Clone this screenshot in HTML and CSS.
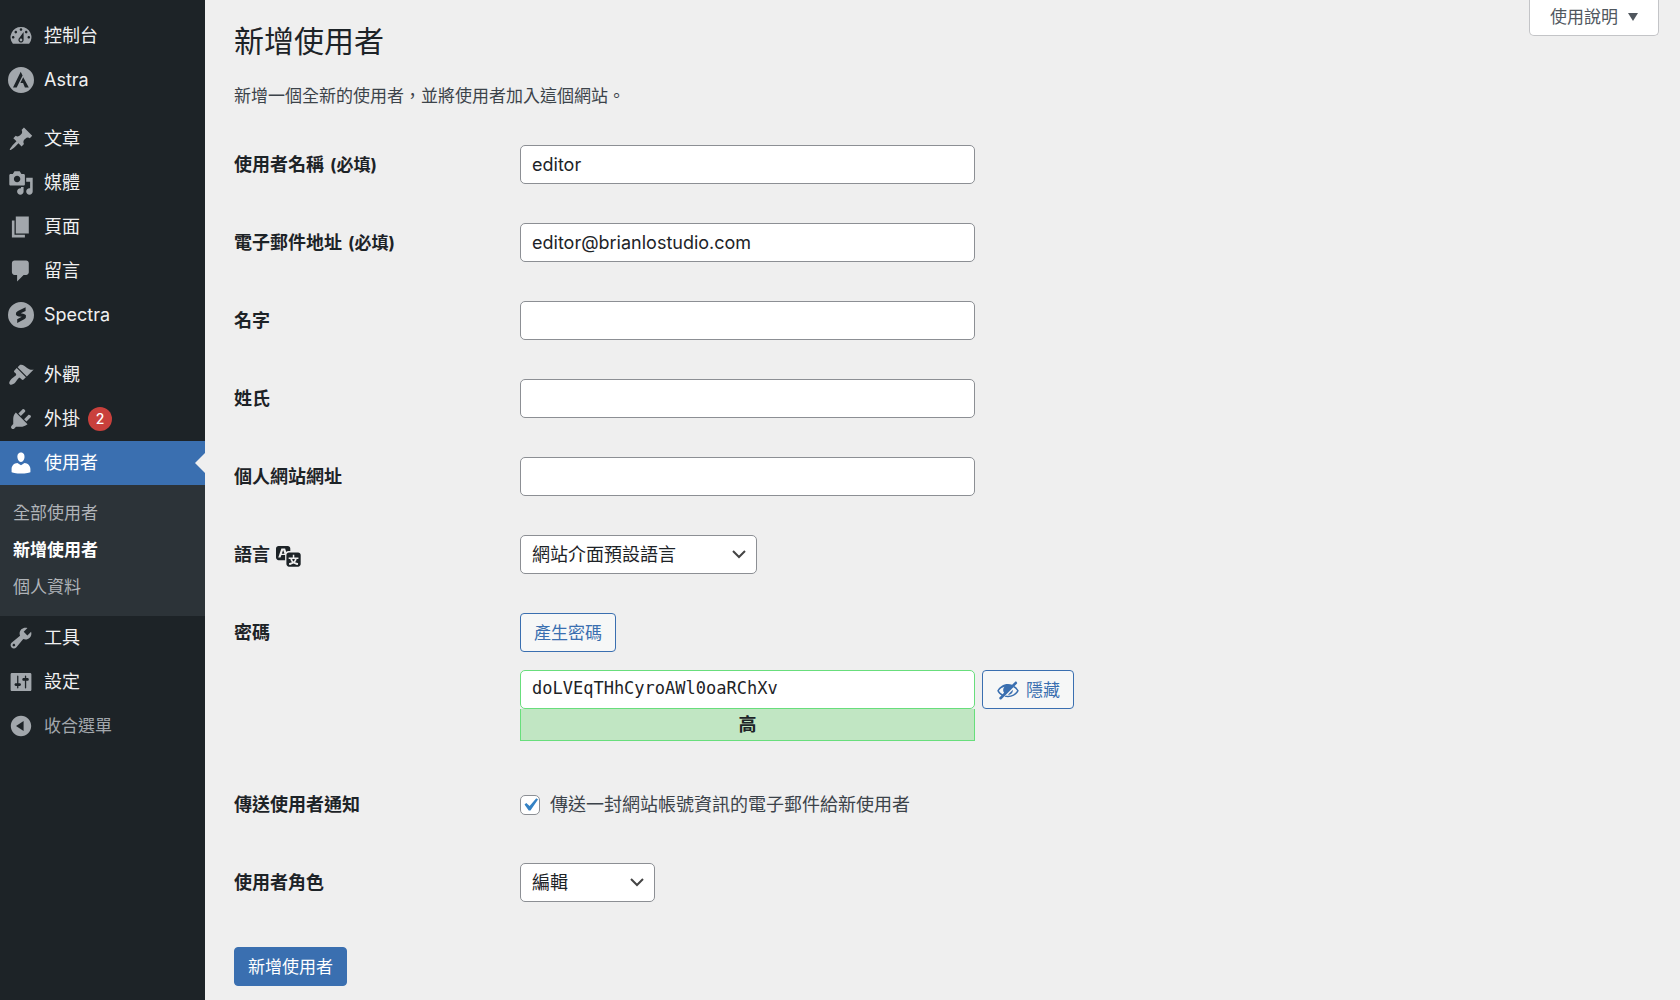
FILE: index.html
```html
<!DOCTYPE html>
<html lang="zh-Hant-TW">
<head>
<meta charset="utf-8">
<meta name="viewport" content="width=device-width, initial-scale=1">
<title>新增使用者</title>
<link rel="stylesheet" href="styles.css">
</head>
<body>
<div class="admin">
  <nav class="menu" aria-label="主選單">
    <ul class="menu-list">
      <li><a class="menu-item" href="#"><svg class="icon" viewBox="0 0 20 20"><path fill-rule="evenodd" d="M3.76 16h12.48A7.998 7.998 0 0 0 10 3a7.998 7.998 0 0 0-6.24 13zM10 4c.55 0 1 .45 1 1s-.45 1-1 1-1-.45-1-1 .45-1 1-1zM6 6c.55 0 1 .45 1 1s-.45 1-1 1-1-.45-1-1 .45-1 1-1zm8 0c.55 0 1 .45 1 1s-.45 1-1 1-1-.45-1-1 .45-1 1-1zm-5.37 5.55L12 7v6c0 1.1-.9 2-2 2s-2-.9-2-2c0-.57.24-1.08.63-1.45zM4 10c.55 0 1 .45 1 1s-.45 1-1 1-1-.45-1-1 .45-1 1-1zm12 0c.55 0 1 .45 1 1s-.45 1-1 1-1-.45-1-1 .45-1 1-1zm-5 3c0-.55-.45-1-1-1s-1 .45-1 1 .45 1 1 1 1-.45 1-1z"/></svg>控制台</a></li>
      <li><a class="menu-item" href="#"><svg class="icon" viewBox="0 0 26 26"><path fill-rule="evenodd" d="M13 0a13 13 0 1 1 0 26a13 13 0 0 1 0-26zM12.700 4.700L5 20.500h3.700l5.900-12zM15.200 10.300l-2.800 5.700h2.700l1.800 4.500h3.900z"/></svg>Astra</a></li>
      <li class="menu-group"><a class="menu-item" href="#"><svg class="icon" viewBox="0 0 20 20"><path d="M10.440 3.020l1.820-1.820 6.360 6.350-1.830 1.820c-1.050-.68-2.480-.57-3.410.36l-.75.75c-.92.93-1.040 2.350-.35 3.410l-1.830 1.820-2.410-2.410-2.800 2.790c-.42.42-3.380 2.710-3.800 2.290s1.860-3.390 2.280-3.810l2.790-2.790L4.100 9.360l1.830-1.820c1.050.69 2.480.57 3.400-.36l.75-.75c.93-.92 1.050-2.350.36-3.410z"/></svg>文章</a></li>
      <li><a class="menu-item" href="#"><svg class="icon" viewBox="0 0 20 20"><path fill-rule="evenodd" d="M13 11V4c0-.55-.45-1-1-1h-1.670L9 1H5L3.670 3H2c-.55 0-1 .45-1 1v7c0 .55.45 1 1 1h10c.55 0 1-.45 1-1zM7 4.500c1.380 0 2.500 1.120 2.500 2.500S8.380 9.500 7 9.500 4.500 8.380 4.500 7 5.620 4.500 7 4.500zM14 6h5v10.500c0 1.380-1.120 2.500-2.500 2.500S14 17.880 14 16.500s1.120-2.500 2.500-2.500c.17 0 .34.02.5.05V9h-3V6zm-4 8.050V13h2v3.500c0 1.380-1.120 2.500-2.500 2.500S7 17.880 7 16.500 8.120 14 9.500 14c.17 0 .34.02.5.05z"/></svg>媒體</a></li>
      <li><a class="menu-item" href="#"><svg class="icon" viewBox="0 0 20 20"><path d="M6 15V2h10v13H6zm-1 1h8v2H3V5h2v11z"/></svg>頁面</a></li>
      <li><a class="menu-item" href="#"><svg class="icon" viewBox="0 0 20 20"><path d="M5 2h9c1.100 0 2 .9 2 2v7c0 1.100-.9 2-2 2h-2l-5 5v-5H5c-1.100 0-2-.9-2-2V4c0-1.100.9-2 2-2z"/></svg>留言</a></li>
      <li><a class="menu-item" href="#"><svg class="icon" viewBox="0 0 26 26"><path fill-rule="evenodd" d="M13 0a13 13 0 1 1 0 26a13 13 0 0 1 0-26zM17.600 5.300L9.900 8.900Q7.400 10.200 7.900 12.600Q8.400 14.200 10.700 14.400L13.800 14.800L9.200 17.200V20.900L16.200 17.200Q18.500 15.800 18 13.600Q17.500 12 15.200 11.700L12.700 11.300L17.600 9z"/></svg>Spectra</a></li>
      <li class="menu-group"><a class="menu-item" href="#"><svg class="icon" viewBox="0 0 20 20"><path d="M14.480 11.060L7.410 3.990l1.500-1.500c.5-.56 2.300-.47 3.510.32 1.210.8 1.430 1.280 2.910 2.100 1.180.64 2.450 1.260 4.450.85zm-.71.71L6.700 4.700 4.930 6.470c-.39.39-.39 1.020 0 1.410l1.060 1.060c.39.39.39 1.030 0 1.420-.6.6-1.430 1.110-2.210 1.690-.35.26-.7.53-1.010.84C1.430 14.230.4 16.080 1.400 17.070c.99 1 2.840-.03 4.180-1.360.31-.31.58-.66.85-1.020.57-.78 1.080-1.610 1.690-2.210.39-.39 1.020-.39 1.410 0l1.060 1.060c.39.39 1.020.39 1.410 0z"/></svg>外觀</a></li>
      <li><a class="menu-item" href="#"><svg class="icon" viewBox="0 0 20 20"><path d="M13.110 4.360L9.870 7.600 8 5.730l3.240-3.240c.35-.34 1.050-.2 1.560.32.52.51.66 1.210.31 1.550zm-8 1.770l.91-1.120 9.010 9.010-1.190.84c-.71.71-2.630 1.160-3.820 1.160H6.140L4.900 17.260c-.59.59-1.540.59-2.120 0-.59-.58-.59-1.530 0-2.120l1.240-1.240v-3.880c0-1.130.4-3.190 1.090-3.890zm7.260 3.970l3.240-3.240c.34-.35 1.040-.21 1.550.31.52.51.66 1.210.31 1.550l-3.240 3.250z"/></svg>外掛<span class="badge">2</span></a></li>
      <li>
        <a class="menu-item menu-item-current" href="#"><svg class="icon" viewBox="0 0 20 20"><path d="M10 9.250c-2.270 0-2.730-3.440-2.730-3.440C7 4.020 7.820 2 9.970 2c2.160 0 2.980 2.020 2.710 3.810 0 0-.41 3.440-2.680 3.440zm0 2.570L12.720 10c2.390 0 4.520 2.330 4.520 4.530v2.490s-3.650 1.130-7.240 1.130c-3.650 0-7.240-1.130-7.240-1.130v-2.490c0-2.250 1.940-4.480 4.470-4.480z"/></svg>使用者</a>
        <ul class="submenu">
          <li><a class="submenu-item" href="#">全部使用者</a></li>
          <li><a class="submenu-item submenu-item-current" href="#" aria-current="page">新增使用者</a></li>
          <li><a class="submenu-item" href="#">個人資料</a></li>
        </ul>
      </li>
      <li><a class="menu-item" href="#"><svg class="icon" viewBox="0 0 20 20"><path fill-rule="evenodd" d="M16.680 9.770c-1.340 1.340-3.300 1.670-4.950.99l-5.410 6.520c-.99.99-2.590.99-3.580 0s-.99-2.590 0-3.570l6.520-5.420c-.68-1.650-.35-3.610.99-4.950 1.280-1.280 3.120-1.620 4.720-1.060l-2.890 2.890 2.820 2.820 2.860-2.870c.53 1.580.18 3.390-1.080 4.650zM3.810 16.210c.4.39 1.040.39 1.430 0 .4-.4.4-1.040 0-1.430-.39-.4-1.030-.4-1.430 0-.39.39-.39 1.030 0 1.430z"/></svg>工具</a></li>
      <li><a class="menu-item" href="#"><svg class="icon" viewBox="0 0 20 20"><path fill-rule="evenodd" d="M18 16V4c0-.55-.45-1-1-1H3c-.55 0-1 .45-1 1v12c0 .55.45 1 1 1h14c.55 0 1-.45 1-1zM8 11h1c.55 0 1 .45 1 1s-.45 1-1 1H8v1.500c0 .28-.22.5-.5.5s-.5-.22-.5-.5V13H6c-.55 0-1-.45-1-1s.45-1 1-1h1V5.500c0-.28.22-.5.5-.5s.5.22.5.5V11zm5-2h-1c-.55 0-1-.45-1-1s.45-1 1-1h1V5.500c0-.28.22-.5.5-.5s.5.22.5.5V7h1c.55 0 1 .45 1 1s-.45 1-1 1h-1v5.500c0 .28-.22.5-.5.5s-.5-.22-.5-.5V9z"/></svg>設定</a></li>
      <li><button class="menu-item menu-collapse" type="button"><svg class="icon" viewBox="0 0 20 20"><path fill-rule="evenodd" d="M10 2.160c4.330 0 7.840 3.510 7.840 7.840s-3.510 7.840-7.840 7.840S2.160 14.330 2.160 10 5.710 2.160 10 2.160zm2 11.720V6.120L6.180 9.970z"/></svg>收合選單</button></li>
    </ul>
  </nav>

  <main class="content">
    <header class="page-head">
      <h1>新增使用者</h1>
      <button class="help" type="button">使用說明<svg class="help-arrow" viewBox="0 0 10 8"><path d="M0 0h10L5 8z"/></svg></button>
    </header>
    <p class="intro">新增一個全新的使用者，並將使用者加入這個網站。</p>

    <form class="form">
      <div class="row"><label class="row-label" for="login">使用者名稱 <span class="required">(必填)</span></label><input class="field" id="login" type="text" value="editor"></div>
      <div class="row"><label class="row-label" for="email">電子郵件地址 <span class="required">(必填)</span></label><input class="field" id="email" type="email" value="editor@brianlostudio.com"></div>
      <div class="row"><label class="row-label" for="first">名字</label><input class="field" id="first" type="text"></div>
      <div class="row"><label class="row-label" for="last">姓氏</label><input class="field" id="last" type="text"></div>
      <div class="row"><label class="row-label" for="url">個人網站網址</label><input class="field" id="url" type="url"></div>
      <div class="row">
        <label class="row-label" for="locale">語言<svg class="translate" viewBox="0 0 20 20"><path fill-rule="evenodd" d="M11 7H9.490c-.63 0-1.250.3-1.590.7L7 5H4.130l-2.390 7h1.690l.74-2H7v4H2c-1.100 0-2-.9-2-2V5c0-1.100.9-2 2-2h7c1.100 0 2 .9 2 2v2zM6.510 9H4.490l1-2.930zM10 8h7c1.100 0 2 .9 2 2v7c0 1.100-.9 2-2 2h-7c-1.100 0-2-.9-2-2v-7c0-1.100.9-2 2-2zm7.250 5v-1.080h-3.170V9.750h-1.160v2.170H9.750V13h1.280c.11.85.56 1.850 1.280 2.620-.87.36-1.890.62-2.310.62-.01.02.22.97.2 1.460.84 0 2.210-.5 3.280-1.150 1.090.65 2.480 1.150 3.340 1.150-.02-.49.2-1.440.2-1.460-.43 0-1.490-.27-2.380-.63.7-.77 1.140-1.770 1.250-2.610h1.360zm-3.810 1.930c-.5-.46-.85-1.130-1.010-1.930h2.090c-.17.8-.51 1.470-1 1.930l-.04.03s-.03-.02-.04-.03z"/></svg></label>
        <select class="field select select-wide" id="locale"><option>網站介面預設語言</option></select>
      </div>
      <div class="row row-password">
        <label class="row-label" for="password">密碼</label>
        <div class="password">
          <button class="button" type="button">產生密碼</button>
          <div class="password-line">
            <div class="password-box">
              <input class="field field-password" id="password" type="text" value="doLVEqTHhCyroAWl0oaRChXv" spellcheck="false">
              <div class="strength">高</div>
            </div>
            <button class="button" type="button"><svg class="eye" viewBox="0 0 20 20"><path fill-rule="evenodd" d="M17.200 3.300l.16.170c.39.390.39 1.020 0 1.410L4.550 17.700c-.39.390-1.030.390-1.410 0l-.17-.17c-.39-.39-.39-1.020 0-1.410l1.590-1.600c-1.570-1-2.760-2.300-3.560-3.930.81-1.650 2.030-2.980 3.640-3.990S8.040 5.090 10 5.090c1.200 0 2.330.21 3.400.6l2.380-2.390c.39-.39 1.030-.39 1.420 0zM2.400 10.590c.69 1.230 1.710 2.250 3.050 3.050l1.280-1.280c-.51-.69-.77-1.470-.77-2.360 0-1.060.36-1.980 1.090-2.760-1.040.27-1.960.7-2.760 1.260-.8.58-1.430 1.270-1.890 2.090z"/><path d="M15.400 6.700C17 7.700 18.200 9 19 10.590c-1.700 3.400-5 5.500-9 5.500-1 0-2-.15-2.900-.4l1.100-1.100c3.900.7 7.500-.9 9.400-4-.75-1.250-1.800-2.200-3.200-2.900z"/><path d="M14.100 9.700c.1 2.400-1.700 4.300-4.200 4.300z"/></svg>隱藏</button>
          </div>
        </div>
      </div>
      <div class="row">
        <span class="row-label">傳送使用者通知</span>
        <label class="check"><input class="checkbox" type="checkbox" checked>傳送一封網站帳號資訊的電子郵件給新使用者</label>
      </div>
      <div class="row">
        <label class="row-label" for="role">使用者角色</label>
        <select class="field select select-narrow" id="role"><option>編輯</option></select>
      </div>
      <button class="button button-primary" type="submit">新增使用者</button>
    </form>
  </main>
</div>
</body>
</html>
```
FILE: styles.css
```css
* {
  box-sizing: border-box;
}

body {
  margin: 0;
  background: #efefef;
  color: #3c434a;
  font-family: Inter, "Noto Sans CJK TC", sans-serif;
  font-size: 18px;
  line-height: 26px;
}

button,
input,
select {
  margin: 0;
  font: inherit;
}

svg {
  display: block;
  flex: none;
  fill: currentColor;
}

.admin {
  display: flex;
  min-height: 100vh;
}

/* Side menu */

.menu {
  flex: none;
  width: 205px;
  padding-top: 14px;
  background: #1d2327;
}

.menu-list,
.submenu {
  margin: 0;
  padding: 0;
  list-style: none;
}

.menu-group {
  margin-top: 15px;
}

.menu-group ~ .menu-group {
  margin-top: 16px;
}

.menu-item {
  position: relative;
  display: flex;
  align-items: center;
  gap: 10px;
  width: 100%;
  height: 44px;
  padding: 0 8px;
  border: 0;
  background: none;
  color: #f0f0f1;
  text-decoration: none;
}

.icon {
  width: 26px;
  height: 26px;
  color: #a2a7ac;
}

.menu-item-current {
  background: #3a6fb0;
  color: #fff;
}

.menu-item-current .icon {
  color: #fff;
}

.menu-item-current::after {
  content: "";
  position: absolute;
  top: 12px;
  right: 0;
  border: solid transparent;
  border-width: 10px 10px 10px 0;
  border-right-color: #efefef;
}

.menu-collapse {
  color: #a2a7ac;
  font-size: 17px;
}

.badge {
  width: 24px;
  height: 24px;
  margin-left: -2px;
  border-radius: 12px;
  background: #c9403c;
  color: #fff;
  font-size: 14px;
  font-weight: 500;
  line-height: 24px;
  text-align: center;
}

.submenu {
  padding: 10px 0;
  background: #2c3338;
}

.submenu-item {
  display: block;
  padding: 0 13px;
  color: #b0b4b8;
  font-size: 17px;
  line-height: 37px;
  text-decoration: none;
}

.submenu-item-current {
  color: #fff;
  font-weight: 700;
}

/* Page */

.content {
  flex: 1;
  padding: 0 21px 15px 29px;
}

.page-head {
  display: flex;
  align-items: flex-start;
  justify-content: space-between;
}

h1 {
  margin: 0;
  padding-top: 21px;
  color: #1d2327;
  font-size: 30px;
  font-weight: 400;
  line-height: 40px;
}

.help {
  display: flex;
  align-items: center;
  gap: 10px;
  height: 36px;
  padding: 0 20px 2px;
  border: 1px solid #c3c4c7;
  border-top: 0;
  border-radius: 0 0 5px 5px;
  background: #fff;
  color: #50575e;
  font-size: 17px;
}

.help-arrow {
  width: 10px;
  height: 8px;
}

.intro {
  margin: 22px 0 36px;
  font-size: 17px;
}

.row {
  display: grid;
  grid-template-columns: 286px 1fr;
  align-items: start;
  margin-bottom: 39px;
}

.row-label {
  display: flex;
  align-items: center;
  gap: 6px;
  height: 39px;
  color: #1d2327;
  font-weight: 700;
}

.required {
  font-size: 17px;
}

.translate {
  width: 26px;
  height: 26px;
}

.field {
  width: 455px;
  height: 39px;
  padding: 0 11px;
  border: 1px solid #8c8f94;
  border-radius: 5px;
  background: #fff;
  color: #1d2327;
}

.select {
  appearance: none;
  background: #fff url("data:image/svg+xml,%3Csvg xmlns='http://www.w3.org/2000/svg' viewBox='0 0 14 9'%3E%3Cpath d='M1 1l6 6 6-6' fill='none' stroke='%23444' stroke-width='2'/%3E%3C/svg%3E") no-repeat right 10px center / 14px 9px;
}

.select-wide {
  width: 237px;
}

.select-narrow {
  width: 135px;
}

.button {
  display: flex;
  align-items: center;
  gap: 6px;
  height: 39px;
  padding: 0 13px;
  border: 1px solid #3a6fb0;
  border-radius: 4px;
  background: #f6f7f7;
  color: #3a6fb0;
  font-size: 17px;
}

.button-primary {
  margin-top: 45px;
  background: #3a6fb0;
  color: #fff;
}

.row-password {
  margin-bottom: 44px;
}

.password {
  display: grid;
  justify-items: start;
  gap: 18px;
}

.password-line {
  display: flex;
  align-items: flex-start;
  gap: 7px;
}

.password-box {
  width: 455px;
}

.field-password {
  display: block;
  padding-bottom: 3px;
  border-color: #68de7c;
  font-family: "DejaVu Sans Mono", monospace;
  font-size: 17px;
}

.strength {
  border: 1px solid #68de7c;
  border-top: 0;
  background: #c1e6c3;
  color: #1d2327;
  font-weight: 700;
  line-height: 31px;
  text-align: center;
}

.eye {
  width: 24px;
  height: 24px;
}

.check {
  display: flex;
  align-items: center;
  gap: 10px;
  height: 39px;
}

.checkbox {
  appearance: none;
  width: 20px;
  height: 20px;
  border: 1px solid #8c8f94;
  border-radius: 5px;
  background: #fff;
}

.checkbox:checked {
  background: #fff url("data:image/svg+xml,%3Csvg xmlns='http://www.w3.org/2000/svg' viewBox='0 0 20 20'%3E%3Cpath d='M14.830 4.890l1.340.94-5.810 8.380H9.020L5.780 9.670l1.340-1.250 2.570 2.400z' fill='%233582c4'/%3E%3C/svg%3E") no-repeat center / 26px 26px;
}
```
